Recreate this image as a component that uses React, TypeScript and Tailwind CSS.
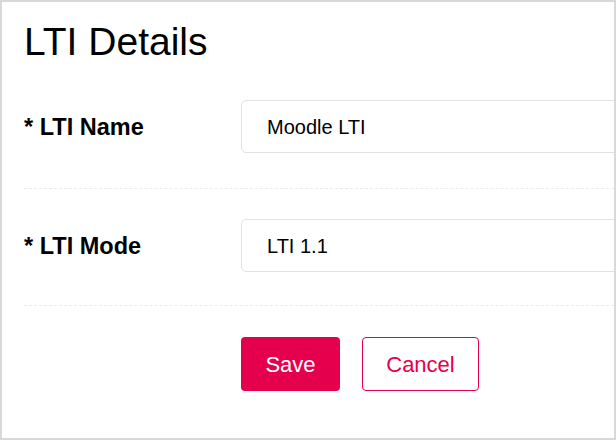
export default function App() {
  const rows = [
    { label: '* LTI Name', value: 'Moodle LTI' },
    { label: '* LTI Mode', value: 'LTI 1.1' },
  ];

  return (
    <div
      className="w-[616px] h-[440px] overflow-hidden border-2 border-[#d9d9d9] bg-white text-black"
      style={{ fontFamily: '"Liberation Sans", Arial, sans-serif' }}
    >
      <div className="pl-[22px] pt-[20px]">
        <h1 className="text-[39px] leading-none font-normal">LTI Details</h1>

        <div className="mt-[39px]">
          {rows.map((row, i) => (
            <div key={row.label} className={i === 0 ? '' : 'mt-[30px]'}>
              <div className="flex items-center">
                <label className="w-[217px] shrink-0 pt-[3px] text-[23.5px] font-bold leading-none">{row.label}</label>
                <div className="w-[420px] shrink-0 h-[53px] flex items-center px-[25px] border border-[#dde3e8] rounded-[5px] text-[20px]">
                  {row.value}
                </div>
              </div>
              <div className={`${i === 0 ? 'mt-[35px]' : 'mt-[33px]'} w-[620px] border-t border-dashed border-[#e9ecef]`} />
            </div>
          ))}
        </div>

        <div className="mt-[31px] ml-[217px] flex gap-[22px]">
          <button className="w-[99px] h-[54px] rounded-[4px] bg-[#e5004d] text-white text-[22px]">Save</button>
          <button className="w-[117px] h-[54px] rounded-[4px] border border-[#e5004d] bg-white text-[#e5004d] text-[22px]">
            Cancel
          </button>
        </div>
      </div>
    </div>
  );
}
